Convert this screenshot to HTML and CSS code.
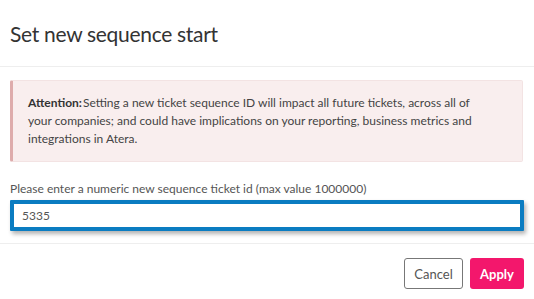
FILE: index.html
```html
<!DOCTYPE html>
<html lang="en">
<head>
    <meta charset="UTF-8">
    <title>Set new sequence start</title>
    <link rel="stylesheet" href="styles.css">
</head>
<body>
    <div class="modal">
        <div class="modal-header">
            <h2>Set new sequence start</h2>
        </div>
        <div class="modal-body">
            <div class="alert">
                <strong>Attention:</strong>Setting a new ticket sequence ID will impact all future tickets, across all of your companies; and could have implications on your reporting, business metrics and integrations in Atera.
            </div>
            <label for="sequenceStart">Please enter a numeric new sequence ticket id (max value 1000000)</label>
            <input type="text" id="sequenceStart" value="5335">
        </div>
        <div class="modal-footer">
            <button type="button" class="btn btn-cancel">Cancel</button>
            <button type="button" class="btn btn-apply">Apply</button>
        </div>
    </div>
</body>
</html>
```
FILE: styles.css
```css
body {
    font-family: 'Lato', sans-serif;
    margin: 0;
    padding: 0;
    background-color: white;
    color: #333;
}

.modal {
    width: 534px;
    height: 299px;
    display: flex;
    flex-direction: column;
}

.modal-header {
    padding: 0 10px;
    height: 66px;
    border-bottom: 1px solid #eeeeee;
    display: flex;
    align-items: center;
}

.modal-header h2 {
    margin: 0;
    font-size: 21px;
    font-weight: normal;
    letter-spacing: -0.3px;
    color: #333;
}

.modal-body {
    padding: 13px 10px 12px 10px;
    border-bottom: 1px solid #eeeeee;
}

.alert {
    background-color: #f9eeee;
    border: 1px solid #f3e3e3;
    border-left: 3px solid #deacac;
    border-radius: 2px;
    padding: 13px 45px 13px 15px;
    font-size: 12px;
    line-height: 18px;
    color: #444;
    margin-right: 1px;
}

.alert strong {
    color: #333;
    margin-right: 1px;
}

label {
    display: block;
    margin-top: 19px;
    margin-bottom: 3px;
    font-size: 12px;
    line-height: 16px;
    color: #555;
}

input[type="text"] {
    display: block;
    width: 100%;
    box-sizing: border-box;
    height: 31px;
    padding: 0 8px;
    border: 4px solid #0a7cc1;
    border-radius: 1px;
    font-family: 'Lato', sans-serif;
    font-size: 12px;
    color: #555;
    box-shadow: 2px 3px 4px rgba(0, 0, 0, 0.3);
    outline: none;
}

.modal-footer {
    display: flex;
    justify-content: flex-end;
    gap: 7px;
    padding: 14px 10px 0 0;
}

.btn {
    height: 31px;
    border-radius: 3px;
    font-family: 'Lato', sans-serif;
    font-size: 13px;
    cursor: pointer;
}

.btn-cancel {
    width: 59px;
    background-color: white;
    border: 1px solid #777;
    color: #555;
}

.btn-apply {
    width: 54px;
    background-color: #f3176c;
    border: none;
    color: white;
    font-weight: bold;
}
```
